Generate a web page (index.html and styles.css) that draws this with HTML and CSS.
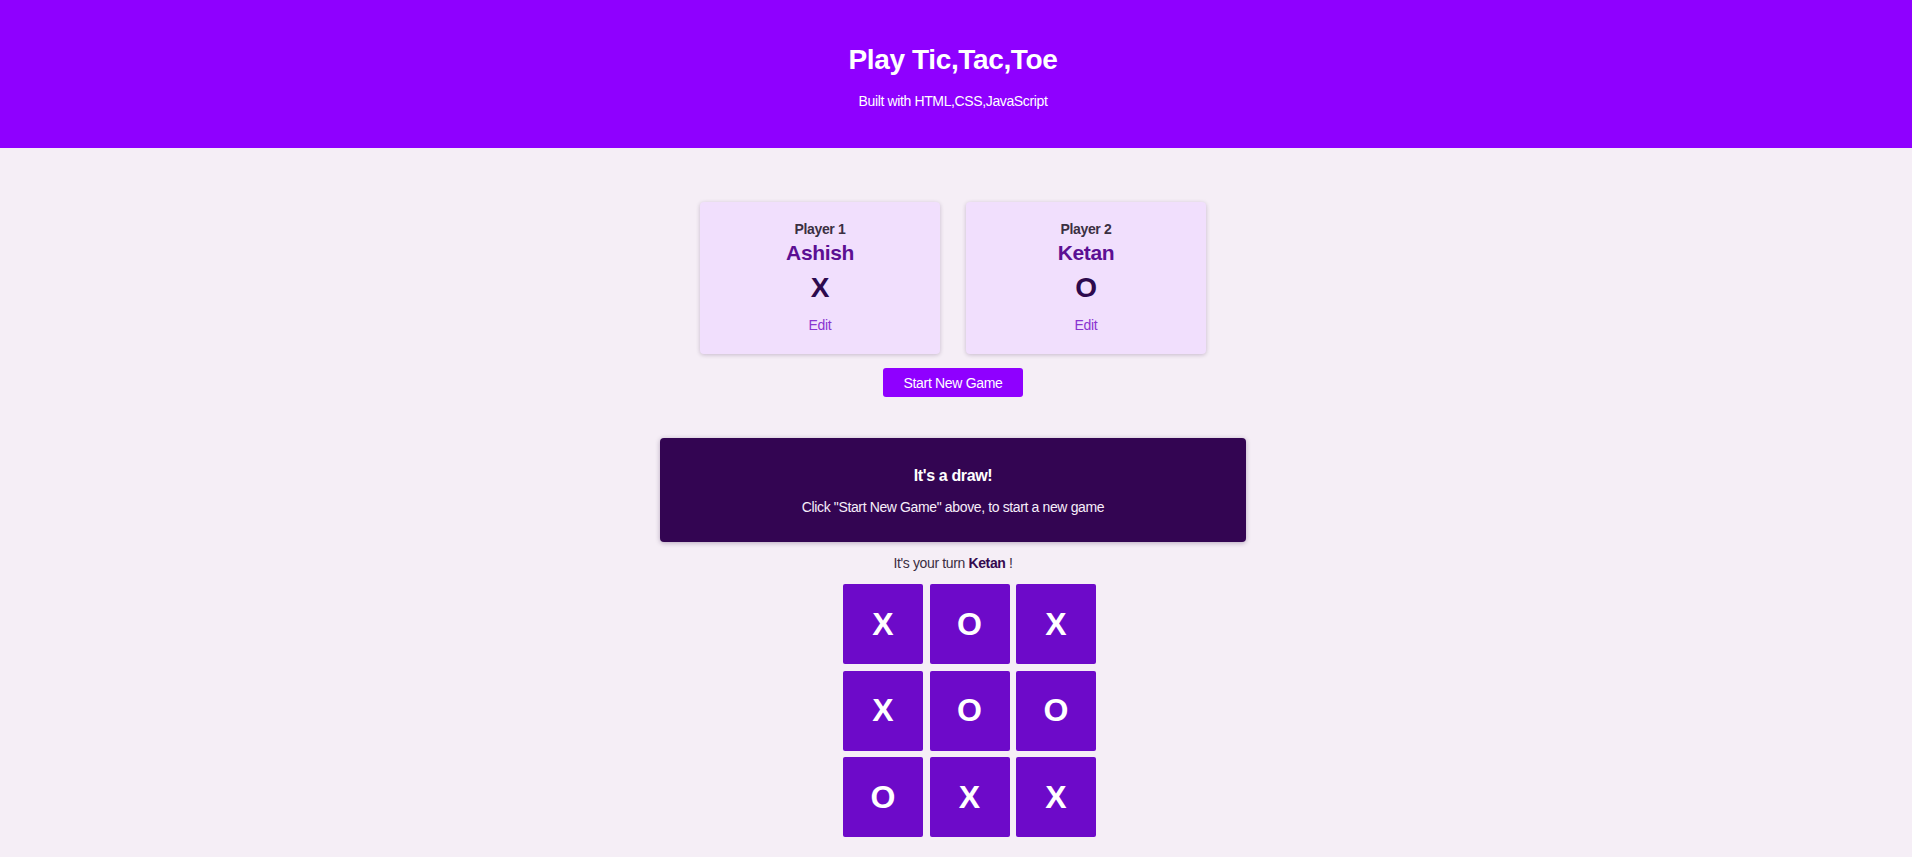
FILE: index.html
```html
<!DOCTYPE html>
<html lang="en">
<head>
<meta charset="utf-8">
<title>Tic Tac Toe</title>
<link rel="stylesheet" href="styles.css">
</head>
<body>
<header class="site-header">
  <h1 class="site-title">Play Tic,Tac,Toe</h1>
  <p class="site-subtitle">Built with HTML,CSS,JavaScript</p>
</header>
<main class="main">
  <section class="config">
    <ol class="players">
      <li class="player-card">
        <h2 class="player-label">Player 1</h2>
        <h3 class="player-name">Ashish</h3>
        <p class="player-symbol">X</p>
        <button class="edit-btn">Edit</button>
      </li>
      <li class="player-card">
        <h2 class="player-label">Player 2</h2>
        <h3 class="player-name">Ketan</h3>
        <p class="player-symbol">O</p>
        <button class="edit-btn">Edit</button>
      </li>
    </ol>
    <button class="start-btn">Start New Game</button>
  </section>
  <section class="game">
    <article class="game-over">
      <h2 class="game-over-title">It's a draw!</h2>
      <p class="game-over-text">Click "Start New Game" above, to start a new game</p>
    </article>
    <p class="turn">It's your turn <span class="turn-name">Ketan</span> !</p>
    <ol class="board">
      <li class="cell">X</li>
      <li class="cell">O</li>
      <li class="cell">X</li>
      <li class="cell">X</li>
      <li class="cell">O</li>
      <li class="cell">O</li>
      <li class="cell">O</li>
      <li class="cell">X</li>
      <li class="cell">X</li>
    </ol>
  </section>
</main>
</body>
</html>
```

FILE: styles.css
```css
* { box-sizing: border-box; }

html, body {
  margin: 0;
  padding: 0;
}

body {
  font-family: "Liberation Sans", Arial, sans-serif;
  background: #f5eef6;
  color: #3a2d42;
  letter-spacing: -0.023em;
}

button {
  letter-spacing: -0.023em;
}

.site-header {
  background: #8f00ff;
  color: #ffffff;
  text-align: center;
  padding: 44px 6px 39px 0;
}

.site-title {
  margin: 0 0 17px;
  font-size: 28px;
  font-weight: bold;
  line-height: 32px;
}

.site-subtitle {
  margin: 0;
  font-size: 14px;
  line-height: 16px;
}

.main {
  padding: 54px 6px 40px 0;
  display: flex;
  flex-direction: column;
  align-items: center;
}

.config {
  display: flex;
  flex-direction: column;
  align-items: center;
}

.players {
  list-style: none;
  margin: 0;
  padding: 0;
  display: flex;
  gap: 26px;
}

.player-card {
  width: 240px;
  height: 152px;
  background: #f1dffd;
  border-radius: 4px;
  box-shadow: 0 1px 4px rgba(40, 0, 60, 0.22);
  text-align: center;
  padding-top: 19px;
  display: flex;
  flex-direction: column;
  align-items: center;
}

.player-label {
  margin: 0;
  font-size: 14px;
  line-height: 16px;
  font-weight: bold;
  color: #3b3042;
}

.player-name {
  margin: 4px 0 0;
  font-size: 21px;
  line-height: 24px;
  font-weight: bold;
  color: #5c0f93;
}

.player-symbol {
  margin: 7px 0 0;
  font-size: 28px;
  line-height: 32px;
  font-weight: bold;
  color: #2d0a4e;
}

.edit-btn {
  margin-top: 13px;
  padding: 0;
  border: none;
  background: none;
  font-family: inherit;
  font-size: 14px;
  line-height: 16px;
  color: #8a34d0;
  cursor: pointer;
}

.start-btn {
  margin-top: 14px;
  width: 140px;
  height: 29px;
  border: none;
  border-radius: 3px;
  background: #8f00ff;
  color: #ffffff;
  font-family: inherit;
  font-size: 14px;
  cursor: pointer;
}

.game {
  margin-top: 41px;
  display: flex;
  flex-direction: column;
  align-items: center;
}

.game-over {
  width: 586px;
  background: #330552;
  color: #f7eefa;
  border-radius: 4px;
  box-shadow: 0 1px 5px rgba(40, 0, 60, 0.3);
  text-align: center;
  padding: 29px 0 27px;
}

.game-over-title {
  margin: 0;
  font-size: 16px;
  line-height: 18px;
  font-weight: bold;
  color: #ffffff;
}

.game-over-text {
  margin: 14px 0 0;
  font-size: 14px;
  line-height: 16px;
}

.turn {
  margin: 13px 0 0;
  font-size: 14px;
  line-height: 16px;
  color: #3a2d42;
}

.turn-name {
  font-weight: bold;
  color: #34094f;
}

.board {
  list-style: none;
  margin: 13px 0 0;
  padding: 0 0 0 33px;
  display: grid;
  grid-template-columns: repeat(3, 80px);
  grid-auto-rows: 80px;
  gap: 6.5px;
}

.cell {
  background: #6d0ac9;
  border-radius: 2px;
  color: #ffffff;
  font-size: 32px;
  font-weight: bold;
  letter-spacing: 0;
  display: flex;
  align-items: center;
  justify-content: center;
}
```
